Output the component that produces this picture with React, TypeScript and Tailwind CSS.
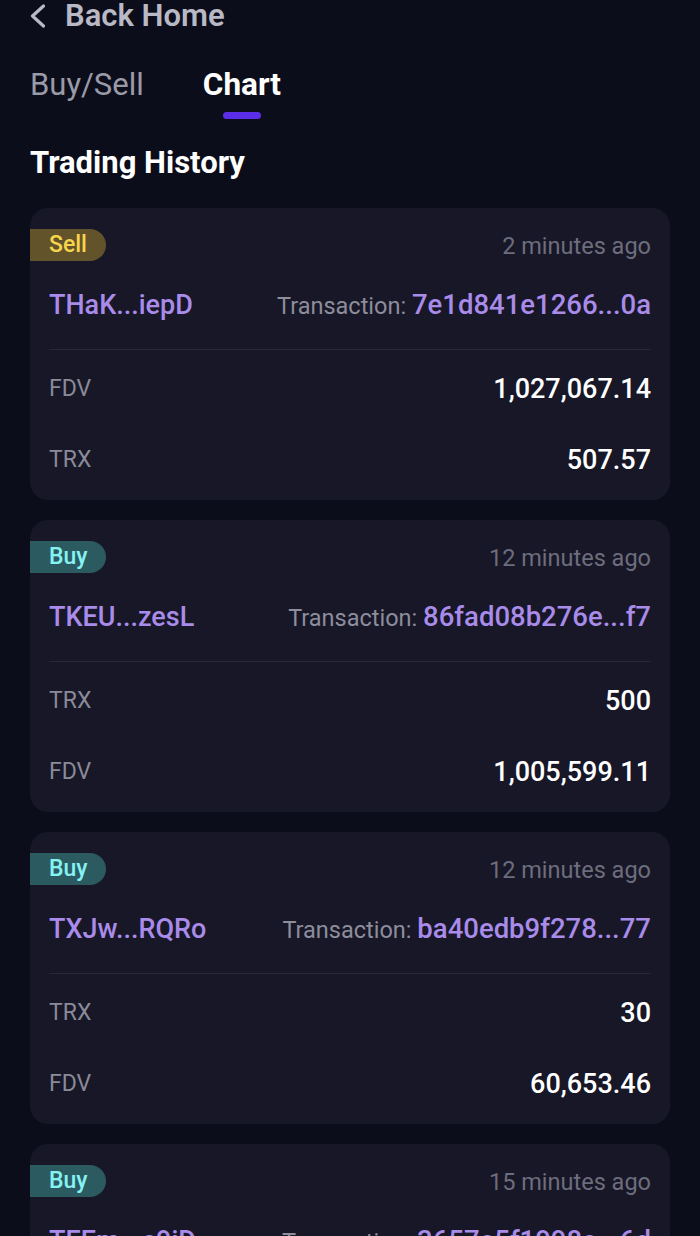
type Trade = {
  side: "Buy" | "Sell";
  time: string;
  address: string;
  tx: string;
  rows: [string, string][];
};

const trades: Trade[] = [
  {
    side: "Sell",
    time: "2 minutes ago",
    address: "THaK...iepD",
    tx: "7e1d841e1266...0a",
    rows: [
      ["FDV", "1,027,067.14"],
      ["TRX", "507.57"],
    ],
  },
  {
    side: "Buy",
    time: "12 minutes ago",
    address: "TKEU...zesL",
    tx: "86fad08b276e...f7",
    rows: [
      ["TRX", "500"],
      ["FDV", "1,005,599.11"],
    ],
  },
  {
    side: "Buy",
    time: "12 minutes ago",
    address: "TXJw...RQRo",
    tx: "ba40edb9f278...77",
    rows: [
      ["TRX", "30"],
      ["FDV", "60,653.46"],
    ],
  },
  {
    side: "Buy",
    time: "15 minutes ago",
    address: "TEEm...c9iD",
    tx: "3657e5f1998a...6d",
    rows: [
      ["TRX", "100"],
      ["FDV", "1,002,110.35"],
    ],
  },
];

function TradeCard({ t }: { t: Trade }) {
  const badge =
    t.side === "Sell"
      ? "bg-[#63532a] text-[#f6d54c]"
      : "bg-[#2c5a61] text-[#86f3f3]";
  return (
    <div className="h-[292px] shrink-0 rounded-[18px] bg-[#171727] pt-[21px]">
      <div className="flex h-[32px] items-center justify-between pr-[19px]">
        <span
          className={`flex h-[32px] w-[76px] items-center rounded-r-full pl-[19px] text-[23px] font-medium ${badge}`}
        >
          {t.side}
        </span>
        <span className="pt-[4px] text-[23.5px] text-[#6d6d7d]">{t.time}</span>
      </div>
      <div className="mx-[19px] mt-[28px] flex h-[61px] items-start justify-between border-b border-[#28283a]">
        <span className="text-[27px] font-medium leading-[32px] text-[#a98be9]">
          {t.address}
        </span>
        <span className="leading-[32px] text-[#8d8d9c]">
          <span className="text-[23.5px]">Transaction: </span>
          <span className="text-[27.5px] font-medium text-[#a98be9]">{t.tx}</span>
        </span>
      </div>
      <div className="flex flex-col px-[19px] pt-[4px]">
        {t.rows.map(([k, v]) => (
          <div key={k} className="flex h-[71px] items-center justify-between">
            <span className="text-[23px] text-[#8a8a98]">{k}</span>
            <span className="text-[27px] font-medium text-white">{v}</span>
          </div>
        ))}
      </div>
    </div>
  );
}

export default function App() {
  return (
    <div
      className="h-[1236px] overflow-hidden bg-[#0c0d1a] px-[30px]"
      style={{ fontFamily: "Roboto, 'Noto Sans', sans-serif" }}
    >
      <div className="-mt-[4px] flex h-[40px] items-center gap-[20px] text-[#b9b9c5]">
        <svg width="15" height="24" viewBox="0 0 15 24" fill="none">
          <path
            d="M13.5 2 L2.5 12 L13.5 22"
            stroke="currentColor"
            strokeWidth="3.2"
            strokeLinecap="round"
            strokeLinejoin="round"
          />
        </svg>
        <span className="text-[31px] font-semibold">Back Home</span>
      </div>
      <div className="mt-[31px] flex items-start gap-[59px]">
        <span className="text-[31px] leading-[36px] text-[#9b9ba8]">Buy/Sell</span>
        <div className="flex flex-col items-center">
          <span className="text-[31.5px] font-bold leading-[36px] text-white">Chart</span>
          <span className="mt-[9px] h-[7px] w-[38px] rounded-full bg-[#5a2ee6]" />
        </div>
      </div>
      <h2 className="mt-[26px] text-[31px] font-bold leading-[36px] text-white">
        Trading History
      </h2>
      <div className="mt-[27px] flex flex-col gap-[20px]">
        {trades.map((t, i) => (
          <TradeCard key={i} t={t} />
        ))}
      </div>
    </div>
  );
}
